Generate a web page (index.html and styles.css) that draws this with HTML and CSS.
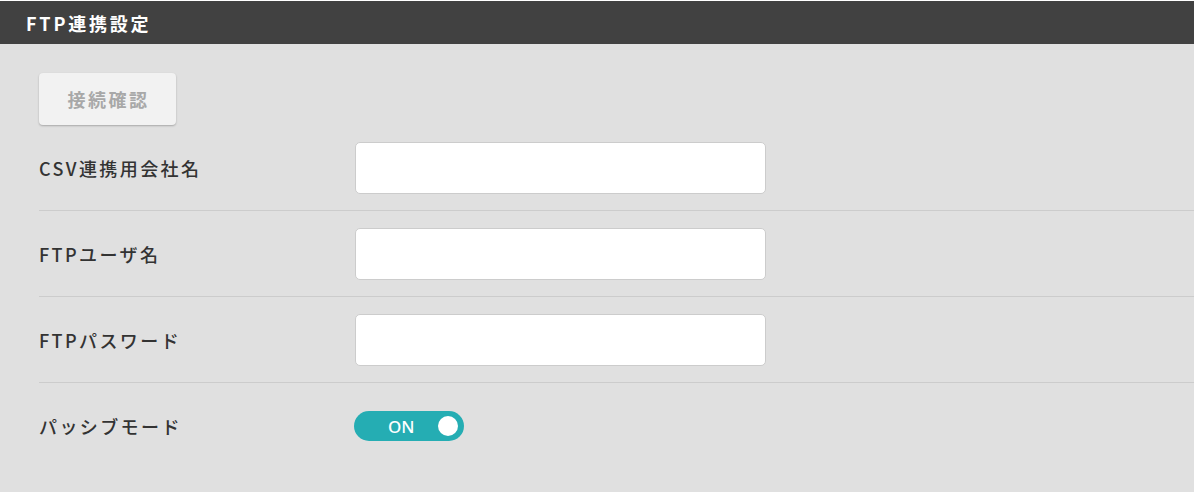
FILE: index.html
```html
<!DOCTYPE html>
<html lang="ja">
<head>
<meta charset="utf-8">
<link rel="stylesheet" href="styles.css">
</head>
<body>
<div class="panel">
  <div class="panel-header">FTP連携設定</div>
  <div class="panel-body">
    <button class="btn-check" type="button">接続確認</button>
    <div class="form-row">
      <label class="form-label">CSV連携用会社名</label>
      <input class="form-input" type="text">
    </div>
    <div class="form-row">
      <label class="form-label">FTPユーザ名</label>
      <input class="form-input" type="text">
    </div>
    <div class="form-row">
      <label class="form-label">FTPパスワード</label>
      <input class="form-input" type="password">
    </div>
    <div class="form-row form-row-last">
      <label class="form-label">パッシブモード</label>
      <div class="toggle"><span class="toggle-text">ON</span><span class="toggle-knob"></span></div>
    </div>
  </div>
</div>
</body>
</html>
```
FILE: styles.css
```css
html, body {
  margin: 0;
  padding: 0;
  background: #e0e0e0;
}
body {
  font-family: "Noto Sans CJK JP", "Noto Sans", sans-serif;
  padding-top: 1px;
  background: #ffffff;
  height: 491px;
  overflow: hidden;
}
.panel {
  background: #e0e0e0;
  height: 100%;
}
.panel-header {
  background: #414141;
  color: #ffffff;
  height: 43px;
  box-sizing: border-box;
  padding-left: 26px;
  display: flex;
  align-items: center;
  font-size: 18px;
  font-weight: 700;
  letter-spacing: 2.8px;
}
.panel-body {
  padding: 29px 0 0 39px;
}
.btn-check {
  display: block;
  width: 137px;
  height: 52px;
  border: none;
  border-radius: 4px;
  background: #f2f2f2;
  box-shadow: 0 1px 2px rgba(0,0,0,0.25);
  color: #a8a8a8;
  font-family: "Noto Sans CJK JP", sans-serif;
  font-size: 18px;
  font-weight: 700;
  letter-spacing: 2.5px;
  padding: 0 0 0 2px;
}
.form-row {
  display: flex;
  align-items: center;
  padding: 17px 0 16px;
  border-bottom: 1px solid #cccccc;
}
.form-row-last {
  border-bottom: none;
  padding-top: 28px;
}
.form-label {
  width: 316px;
  font-size: 18px;
  font-weight: 500;
  color: #333333;
  letter-spacing: 2.4px;
}
.form-input {
  width: 411px;
  height: 52px;
  box-sizing: border-box;
  border: 1px solid #cccccc;
  border-radius: 5px;
  background: #ffffff;
  margin: 0;
}
.toggle {
  width: 110px;
  height: 30px;
  border-radius: 15px;
  background: #25adb3;
  display: flex;
  align-items: center;
  box-sizing: border-box;
  padding: 0 6px 0 34px;
  margin-left: -1px;
}
.toggle-text {
  color: #ffffff;
  font-family: "Noto Sans", sans-serif;
  font-size: 17px;
  font-weight: 500;
  flex: 1;
}
.toggle-knob {
  width: 20px;
  height: 20px;
  border-radius: 50%;
  background: #ffffff;
}
```
